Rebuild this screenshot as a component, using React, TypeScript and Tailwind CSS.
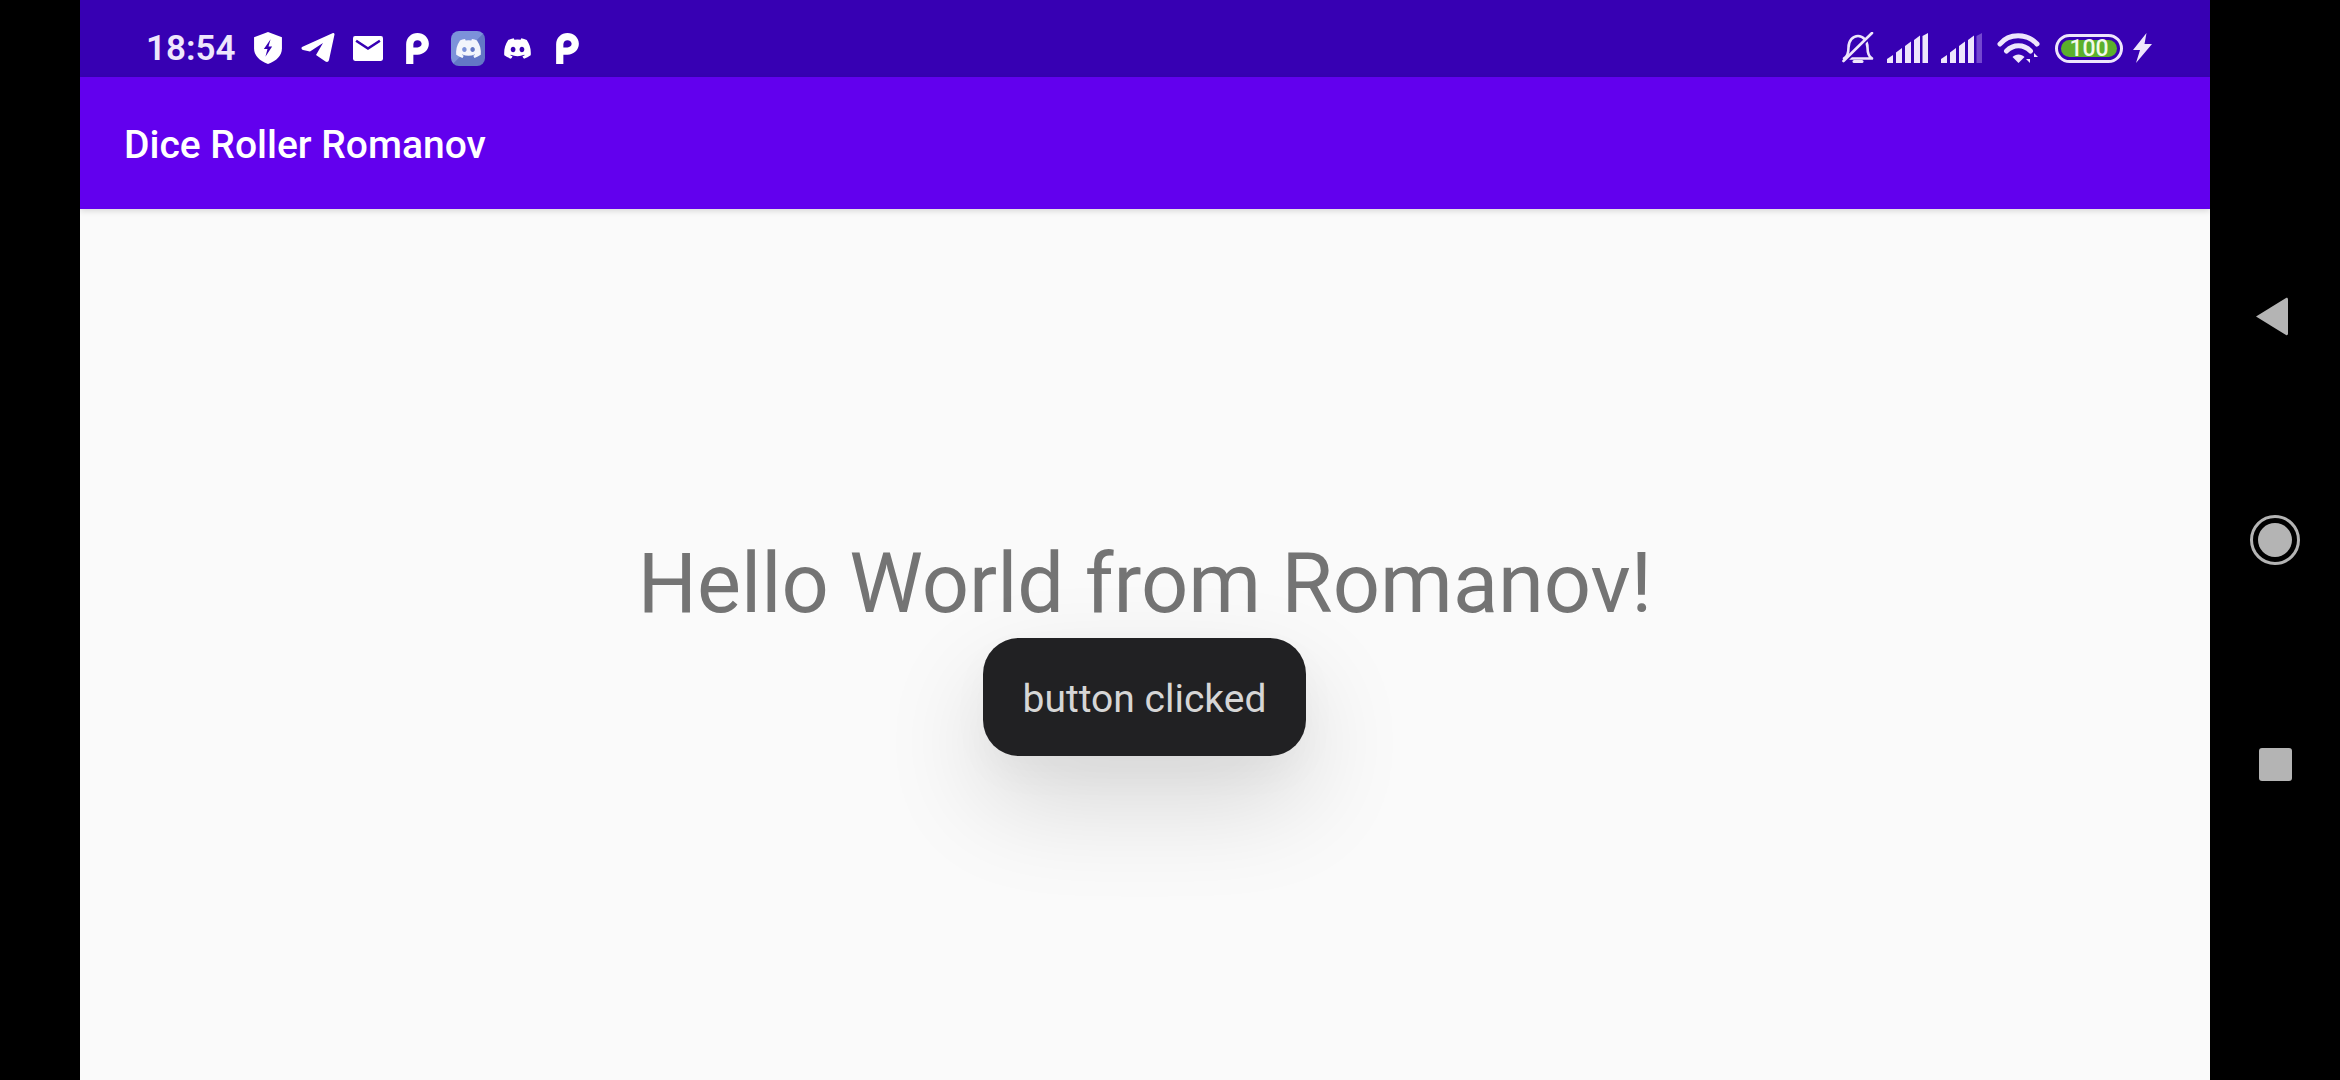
import { FaDiscord } from "react-icons/fa";

function Shield() {
  return (
    <svg width="28" height="32" viewBox="0 0 27 31">
      <path d="M13.500 0 27 5v11c0 7-5.500 12-13.500 15C5.500 28 0 23 0 16V5z" fill="#fff" />
      <path d="M16 7l-6.500 9.500h3.500L11 24l6.500-10h-3.500z" fill="#3700B3" />
    </svg>
  );
}

function Telegram() {
  return (
    <svg width="34" height="30" viewBox="0 0 34 30" fill="#fff">
      <path d="M1 14 32 0c1 0 1.500.5 1.500 1.500L28 27c-.5 2-2 2.500-3.500 1.500L15 22l7-12-13 8.500-7-1.500c-1.500-.5-2-2-1-3z" />
    </svg>
  );
}

function Mail() {
  return (
    <svg width="30" height="25" viewBox="0 0 29 24">
      <rect width="29" height="24" rx="2" fill="#fff" />
      <path d="M3 4.500 14.500 12 26 4.500" fill="none" stroke="#3700B3" strokeWidth="2.500" />
    </svg>
  );
}

function PLogo() {
  return (
    <svg width="23" height="31" viewBox="0 0 22 30">
      <path
        fillRule="evenodd"
        d="M0 30V11C0 4.500 5 0 11 0s11 4.500 11 10.500S17 21 11 21H7v9zM7 14h4c2.200 0 4-1.500 4-3.500S13.200 7 11 7 7 8.500 7 11z"
        fill="#fff"
      />
    </svg>
  );
}

function DiscordTile() {
  return (
    <div className="w-[34px] h-[35px] rounded-[8px] bg-[linear-gradient(135deg,#7c92da_50%,#6377c6_51%)] flex items-center justify-center">
      <FaDiscord className="text-[#f3f5fc] text-[27px]" />
    </div>
  );
}

function Bell() {
  return (
    <svg width="32" height="32" viewBox="0 0 32 32" fill="none" stroke="#EEE6FC" strokeWidth="2.600">
      <path d="M2 26.500c3.500-2 4.500-5 4.500-11 0-7 4.500-11.500 9.500-11.500s9.500 4.500 9.500 11.500c0 6 1 9 4.500 11z" strokeLinejoin="round" />
      <path d="M12 29.500h8" strokeWidth="3" strokeLinecap="round" />
      <path d="M1.500 31 30.500 2" stroke="#3700B3" strokeWidth="3.500" />
      <path d="M1.500 29 30 1" strokeLinecap="round" />
    </svg>
  );
}

function Signal({ dim }: { dim?: boolean }) {
  return (
    <svg width="41" height="30" viewBox="0 0 41 30" fill="#EEE6FC">
      <path d="M0 30v-4l6-4v8z" />
      <path d="M9 30V19.500l6-4.500v15z" />
      <path d="M18 30V13l6-4.500V30z" />
      <path d="M27 30V7l6-4.500V30z" />
      <path d="M35.500 30V3L41 0v30z" fill={dim ? "#7448D0" : "#EEE6FC"} />
    </svg>
  );
}

function Wifi() {
  return (
    <svg width="44" height="31" viewBox="0 0 44 31" fill="none" stroke="#EEE6FC" strokeWidth="5">
      <path d="M3 11C12 0 30 0 40 11" strokeLinecap="round" />
      <path d="M9.500 18c7-7 17-7 24 0" strokeLinecap="round" />
      <path d="M15.500 24c3-3.500 9-3.500 12 0L21.500 30z" fill="#EEE6FC" stroke="none" />
      <path d="M33 19v11l-4-4h4zM37 31V20l4 4h-4z" fill="#EEE6FC" stroke="none" />
    </svg>
  );
}

function Battery() {
  return (
    <div className="w-[68px] h-[29px] rounded-full border-[3px] border-[#EEE6FC] p-[3px] flex">
      <div className="flex-1 rounded-full bg-[#5BB02C] flex items-center justify-center">
        <span className="text-[23px] leading-[17px] font-medium text-[#F1FAE9]">100</span>
      </div>
    </div>
  );
}

function Bolt() {
  return (
    <svg width="19" height="30" viewBox="0 0 19 30" fill="#EEE6FC">
      <path d="M13.500 0 0 17h7L3 30 19 11h-7.500z" />
    </svg>
  );
}

export default function App() {
  return (
    <div className="w-[2340px] h-[1080px] flex bg-black overflow-hidden font-['Roboto',sans-serif]">
      <div className="w-[80px] shrink-0" />
      <div className="w-[2130px] shrink-0 flex flex-col bg-[#FAFAFA]">
        <div className="h-[77px] shrink-0 bg-[#3700B3] flex items-center justify-between pl-[66px] pr-[58px] pt-[22px] pb-[3px]">
          <div className="flex items-center">
            <span className="text-[35px] leading-[40px] font-semibold text-[#EEE6FC] w-[108px] translate-y-[1px]">18:54</span>
            <Shield />
            <div className="ml-[19px]">
              <Telegram />
            </div>
            <div className="ml-[18px]">
              <Mail />
            </div>
            <div className="ml-[23px]">
              <PLogo />
            </div>
            <div className="ml-[22px]">
              <DiscordTile />
            </div>
            <FaDiscord className="text-white text-[29px] ml-[18px]" />
            <div className="ml-[24px]">
              <PLogo />
            </div>
          </div>
          <div className="flex items-center">
            <Bell />
            <div className="ml-[13px]">
              <Signal />
            </div>
            <div className="ml-[13px]">
              <Signal dim />
            </div>
            <div className="ml-[15px]">
              <Wifi />
            </div>
            <div className="ml-[14px]">
              <Battery />
            </div>
            <div className="ml-[10px]">
              <Bolt />
            </div>
          </div>
        </div>
        <div className="h-[132px] shrink-0 bg-[#6200EE] flex items-center pl-[44px] pt-[3px] shadow-[0_2px_6px_rgba(0,0,0,0.14)] z-10">
          <span className="text-[39px] leading-[44px] font-medium text-white">Dice Roller Romanov</span>
        </div>
        <div className="flex-1 relative flex flex-col items-center pt-[322px]">
          <span className="text-[83px] leading-[106px] text-[#747474] font-normal">Hello World from Romanov!</span>
          <div className="absolute left-[903px] top-[429px] w-[323px] h-[118px] pt-[3px] rounded-[36px] bg-[#212123] flex items-center justify-center shadow-[0_45px_105px_rgba(0,0,0,0.14),0_16px_40px_rgba(0,0,0,0.03)]">
            <span className="text-[39px] leading-[48px] text-[#D6D6D6]">button clicked</span>
          </div>
        </div>
      </div>
      <div className="w-[130px] shrink-0 flex flex-col items-center pt-[297px]">
        <svg width="33" height="39" viewBox="0 0 33 39" className="-ml-[7px]">
          <path d="M31 1 1 19.500 31 38c1 .5 2 0 2-1.500V2.500C33 1 32 .5 31 1z" fill="#B4B4B4" />
        </svg>
        <div className="mt-[179px] w-[50px] h-[50px] rounded-full border-[3px] border-[#B4B4B4] flex items-center justify-center">
          <div className="w-[34px] h-[34px] rounded-full bg-[#B4B4B4]" />
        </div>
        <div className="mt-[183px] w-[33px] h-[33px] rounded-[3px] bg-[#B4B4B4]" />
      </div>
    </div>
  );
}
